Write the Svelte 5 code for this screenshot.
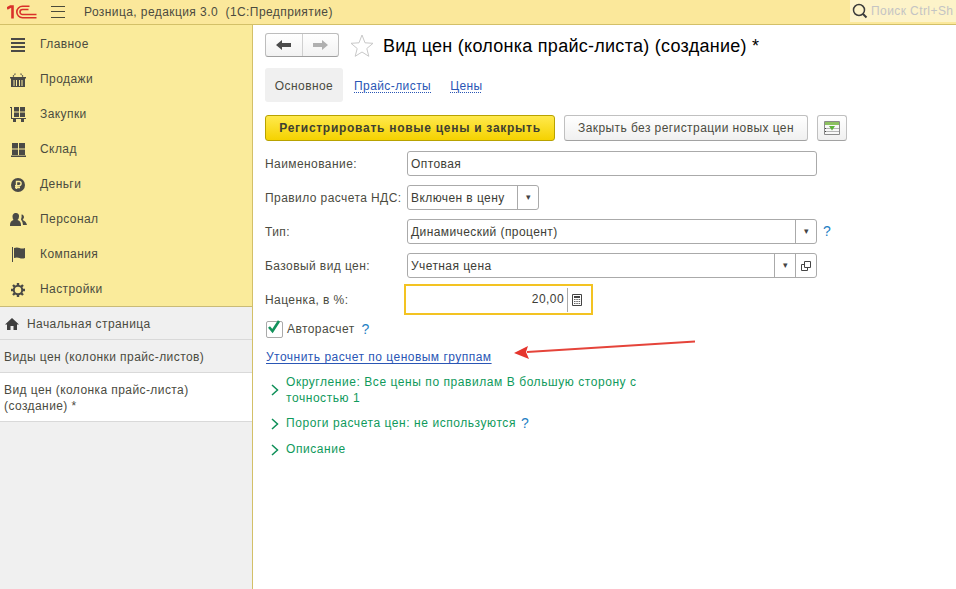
<script>
  const menu = ['Главное','Продажи','Закупки','Склад','Деньги','Персонал','Компания','Настройки'];
</script>

<div class="app">
  <header class="top">
    <svg class="logo" width="30" height="16" viewBox="0 0 30 16" fill="none" stroke="#d9302a">
      <path d="M0 4.500l3.500-2H5.500V14.500" stroke-width="2.600"/>
      <path d="M22.500 2.300H15.500a5.600 5.600 0 0 0 0 11.400H29.500" stroke-width="1.600"/>
      <path d="M21.500 5.500H15.500a2.500 2.500 0 0 0 0 5H29.500" stroke-width="1.600"/>
    </svg>
    <svg class="burger" width="16" height="14" viewBox="0 0 16 14" stroke="#4a4a3a"><path d="M1 1.500h14M1 6.500h14M1 12.500h14"/></svg>
    <div class="apptitle">Розница, редакция 3.0 &nbsp;(1С:Предприятие)</div>
    <div class="search">
      <svg width="16" height="16" viewBox="0 0 16 16" fill="none" stroke="#3c3c3c" stroke-width="1.500"><circle cx="7" cy="7" r="5.500"/><path d="M11 11l3.500 3.500" stroke-width="2"/></svg>
      <span>Поиск Ctrl+Sh</span>
    </div>
  </header>

  <div class="body">
    <aside class="side">
      <nav class="menu">
        {#each menu as item, i}
          <div class="mi">
            <span class="mic">
              {#if i === 0}
                <svg width="16" height="14" viewBox="0 0 16 14" fill="#4a4a46"><path d="M1 0h14v2H1zM1 4h14v2H1zM1 8h14v2H1zM1 12h14v2H1z"/></svg>
              {:else if i === 1}
                <svg width="16" height="14" viewBox="0 0 16 14"><path d="M0 4h16v1.500H0zM1 5h14v9H1z" fill="#4a4a46"/><path d="M4 7v6M6.500 7v6M9.500 7v6M12 7v6" stroke="#faeb9b"/><path d="M3 3.500L5.500.500M13 3.500L10.500.500" fill="none" stroke="#4a4a46" stroke-width="1.200" stroke-dasharray="1.500 .8"/></svg>
              {:else if i === 2}
                <svg width="16" height="15" viewBox="0 0 16 15" fill="#4a4a46"><path d="M0 0h2v11h14v1H1V1H0zM4 0h5v4.500H4zM10 0h5v4.500h-5zM4 5.500h5V10H4zM10 5.500h5V10h-5zM3 12h3v3H3zM11 12h3v3h-3z"/></svg>
              {:else if i === 3}
                <svg width="15" height="14" viewBox="0 0 15 14" fill="#4a4a46"><path d="M1 0h6v5.500H1zM8 0h6v5.500H8zM1 6.500h6V12H1zM8 6.500h6V12H8zM0 12.500h15V14H0z"/></svg>
              {:else if i === 4}
                <svg width="14" height="14" viewBox="0 0 14 14"><circle cx="7" cy="7" r="7" fill="#4a4a46"/><path d="M5.500 11V3.500h2.500a2 2 0 0 1 0 4.200H4M4 9.500h5" fill="none" stroke="#faeb9b" stroke-width="1.400"/></svg>
              {:else if i === 5}
                <svg width="17" height="13" viewBox="0 0 17 13" fill="#4a4a46"><path d="M6 0a3 3 0 0 1 3 3.500q0 2-1.500 3.500q3.500 1 3.500 5v1H0v-1q0-4 3.500-5Q2.500 5.500 2.500 3.500A3.200 3.200 0 0 1 6 0z"/><path d="M11.500 1.500a2.500 2.500 0 0 1 2 4q-.5 1-1 1.500q3.500 1 4.500 5h-4q0-3-2-5.500q1-2 .5-5z"/></svg>
              {:else if i === 6}
                <svg width="15" height="15" viewBox="0 0 15 15" fill="#4a4a46"><path d="M1 0h1v15H1zM3 1q3-1 5.500 0t5.500 0v10q-3 1-5.500 0T3 11z"/></svg>
              {:else}
                <svg width="16" height="16" viewBox="0 0 16 16"><path d="M8 1v14M1 8h14M3 3l10 10M13 3L3 13" stroke="#4a4a46" stroke-width="2.400"/><circle cx="8" cy="8" r="4.200" fill="#faeb9b" stroke="#4a4a46" stroke-width="2"/></svg>
              {/if}
            </span>
            <span>{item}</span>
          </div>
        {/each}
      </nav>
      <div class="tabs">
        <div class="tab home">
          <svg width="14" height="12" viewBox="0 0 14 12" fill="#3f3f3f"><path d="M7 0l7 6.500h-2V12H8.500V8h-3v4H2V6.500H0z"/></svg>
          <span>Начальная страница</span>
        </div>
        <div class="tab second">Виды цен (колонки прайс-листов)</div>
        <div class="tab active">Вид цен (колонка прайс-листа)<br />(создание) *</div>
      </div>
    </aside>

    <main class="main">
      <div class="titlebar">
        <div class="navbtns">
          <button class="nb" aria-label="Назад">
            <svg width="15" height="10" viewBox="0 0 15 10" fill="#4b4b4b"><path d="M0 5l6-5v3h9v4H6v3z"/></svg>
          </button>
          <button class="nb" aria-label="Вперед">
            <svg width="15" height="10" viewBox="0 0 15 10" fill="#b0b0b0"><path d="M15 5L9 0v3H0v4h9v3z"/></svg>
          </button>
        </div>
        <svg class="star" width="24" height="23" viewBox="0 0 24 23" fill="#fff" stroke="#c8c8c8"><path d="M12 1l3 7.800 8 .5-6.200 5.200 2 7.800L12 18l-6.800 4.300 2-7.800L1 9.300l8-.5z"/></svg>
        <h1>Вид цен (колонка прайс-листа) (создание) *</h1>
      </div>

      <div class="pagetabs">
        <div class="pt cur">Основное</div>
        <a class="pt lnk" href="#a">Прайс-листы</a>
        <a class="pt lnk" href="#a">Цены</a>
      </div>

      <div class="cmd">
        <button class="primary">Регистрировать новые цены и закрыть</button>
        <button class="secondary">Закрыть без регистрации новых цен</button>
        <button class="iconbtn" aria-label="Таблица">
          <svg width="16" height="14" viewBox="0 0 16 14"><path d="M.5.500h15v13H.500z" fill="#f8f8f8" stroke="#8a8a8a"/><path d="M1 1h14v3H1z" fill="#8cc060"/><path d="M1 7.500h14M1 10.500h14" stroke="#b5b5b5"/><path d="M1 7.500h1M1 10.500h1" stroke="#444"/><path d="M5 5h6L8 9.500z" fill="#5db33a"/></svg>
        </button>
      </div>

      <div class="form">
        <div class="row">
          <span class="lab">Наименование:</span>
          <div class="field w410"><span class="val">Оптовая</span></div>
        </div>
        <div class="row">
          <span class="lab">Правило расчета НДС:</span>
          <div class="field w132"><span class="val">Включен в цену</span><span class="drop">▾</span></div>
        </div>
        <div class="row">
          <span class="lab">Тип:</span>
          <div class="field w410"><span class="val">Динамический (процент)</span><span class="drop">▾</span></div>
          <span class="q qt">?</span>
        </div>
        <div class="row">
          <span class="lab">Базовый вид цен:</span>
          <div class="field w410">
            <span class="val">Учетная цена</span><span class="drop">▾</span>
            <span class="open"><svg width="10" height="10" viewBox="0 0 10 10" fill="none" stroke="#444"><path d="M3.500.500h6v6h-6zM3.500 3.500H.500v6h6V6.500"/></svg></span>
          </div>
        </div>
        <div class="row">
          <span class="lab">Наценка, в %:</span>
          <div class="focus">
            <span class="num">20,00</span>
            <span class="calc"><svg width="10" height="12" viewBox="0 0 10 12"><path d="M.500.500h9v11h-9z" fill="none" stroke="#444"/><path d="M2 2h6v2H2z" fill="#444"/><path d="M2 5.500h1.500M4.300 5.500h1.500M6.600 5.500h1.500M2 7.500h1.500M4.300 7.500h1.500M6.600 7.500h1.500M2 9.500h1.500M4.300 9.500h1.500M6.600 9.500h1.500" stroke="#666"/></svg></span>
          </div>
        </div>
      </div>

      <div class="check">
        <span class="cb"><svg width="16" height="15" viewBox="0 0 16 15" fill="none" stroke="#12925c" stroke-width="2.600"><path d="M3 7l3.500 4L13 1"/></svg></span>
        <span>Авторасчет</span>
        <span class="q qa">?</span>
      </div>

      <a class="refine" href="#a">Уточнить расчет по ценовым группам</a>

      <div class="groups">
        <div class="grp two">
          <svg class="chev" width="8" height="12" viewBox="0 0 8 12" fill="none" stroke="#0e8f58" stroke-width="1.500"><path d="M1 1l5.500 5L1 11"/></svg>
          <span class="gt">Округление: Все цены по правилам В большую сторону с<br />точностью 1</span>
        </div>
        <div class="grp">
          <svg class="chev" width="8" height="12" viewBox="0 0 8 12" fill="none" stroke="#0e8f58" stroke-width="1.500"><path d="M1 1l5.500 5L1 11"/></svg>
          <span class="gt">Пороги расчета цен: не используются</span>
          <span class="q ql">?</span>
        </div>
        <div class="grp">
          <svg class="chev" width="8" height="12" viewBox="0 0 8 12" fill="none" stroke="#0e8f58" stroke-width="1.500"><path d="M1 1l5.500 5L1 11"/></svg>
          <span class="gt">Описание</span>
        </div>
      </div>

      <svg class="arrow" width="190" height="22" viewBox="0 0 190 22">
        <path d="M182 1.500L14 12" stroke="#e5443a" stroke-width="1.800" fill="none"/>
        <path d="M1 13L15 6l-2 6 3 7z" fill="#e5352d"/>
      </svg>
    </main>
  </div>
</div>

<style>
  :global(body) { margin: 0; background: #fff; overflow: hidden; }
  .app { width: 956px; height: 589px; display: flex; flex-direction: column; overflow: hidden; font: 12px/15px "Liberation Sans", Arial, sans-serif; color: #4b4b3f; letter-spacing: .42px; }
  .top { height: 24px; flex: none; display: flex; align-items: center; background: #fbe89b; border-bottom: 1px solid #d3c068; box-sizing: content-box; }
  .logo { margin-left: 7px; flex: none; }
  .burger { margin-left: 13px; flex: none; }
  .apptitle { margin-left: 18px; white-space: nowrap; }
  .search { margin-left: auto; width: 106px; height: 22px; background: #fdf3c9; display: flex; align-items: center; gap: 3px; padding-left: 2px; box-sizing: border-box; align-self: flex-start; overflow: hidden; white-space: nowrap; color: #c4c4c4; flex: none; }
  .search svg { flex: none; }
  .body { flex: 1; display: flex; min-height: 0; }
  .side { width: 252px; flex: none; border-right: 1px solid #d3c068; background: #f0f0f0; display: flex; flex-direction: column; }
  .menu { background: #faeb9b; height: 282px; padding-top: 2px; box-sizing: border-box; border-bottom: 1px solid #c9bb77; }
  .mi { height: 35px; display: flex; align-items: center; }
  .mic { width: 40px; padding-left: 3px; box-sizing: border-box; display: flex; justify-content: center; padding-right: 7px; }
  .tab { padding: 9px 4px 8px; box-sizing: border-box; border-bottom: 1px solid #d9d9d9; background: #f0f0f0; height: 33px; white-space: nowrap; }
  .tab.second { padding-top: 10px; }
  .tab.home { display: flex; align-items: center; gap: 8px; padding: 2px 4px 0 5px; }
  .tab.active { background: #fff; height: 49px; padding-top: 9px; line-height: 16px; }
  .main { flex: 1; position: relative; padding-left: 12px; min-width: 0; }
  .titlebar { display: flex; align-items: center; height: 24px; margin-top: 8px; }
  .navbtns { display: flex; width: 74px; height: 24px; box-sizing: border-box; border: 1px solid #bdbdbd; border-bottom-color: #9f9f9f; border-radius: 3px; background: linear-gradient(#fff, #f2f2f2); }
  .nb { flex: 1; border: 0; background: transparent; padding: 0; display: flex; align-items: center; justify-content: center; }
  .nb + .nb { border-left: 1px solid #d0d0d0; }
  .star { margin-left: 11px; flex: none; }
  h1 { margin: 2px 0 0 9px; font: 400 18px/24px "Liberation Sans", Arial, sans-serif; color: #000; letter-spacing: .27px; white-space: nowrap; }
  .pagetabs { display: flex; margin-top: 11px; height: 34px; }
  .pt { display: flex; align-items: center; padding-top: 2px; box-sizing: border-box; }
  .cur { width: 78px; justify-content: center; background: #f0f0f0; border-radius: 3px; }
  .lnk { color: #2a56b5; text-decoration: underline dotted #2a56b5; text-underline-offset: 2px; }
  .pt.lnk:nth-child(2) { margin-left: 11px; }
  .pt.lnk:nth-child(3) { margin-left: 19px; }
  .cmd { display: flex; margin-top: 13px; height: 26px; }
  button { font: inherit; letter-spacing: inherit; cursor: pointer; }
  .primary { width: 290px; height: 26px; border: 1px solid #b8a200; border-radius: 3px; background: linear-gradient(#ffe94d, #f5d200); color: #3f3f30; font-weight: 700; padding: 0; letter-spacing: .72px; }
  .secondary { width: 244px; height: 26px; margin-left: 9px; border: 1px solid #c0c0c0; border-bottom-color: #a2a2a2; border-radius: 3px; background: linear-gradient(#fff, #f0f0f0); color: #4b4b3f; padding: 0; }
  .iconbtn { width: 30px; height: 26px; margin-left: 9px; border: 1px solid #c0c0c0; border-bottom-color: #a2a2a2; border-radius: 3px; background: linear-gradient(#fff, #f0f0f0); padding: 0; display: flex; align-items: center; justify-content: center; }
  .form { margin-top: 10px; display: flex; flex-direction: column; gap: 9px; }
  .row { display: flex; align-items: center; height: 25px; }
  .lab { width: 142px; flex: none; white-space: nowrap; padding-top: 1px; }
  .field { height: 25px; box-sizing: border-box; border: 1px solid #aaa; border-radius: 3px; display: flex; align-items: center; background: #fff; }
  .w410 { width: 410px; }
  .w132 { width: 132px; }
  .val { flex: 1; padding: 1px 0 0 3px; color: #3d3d36; white-space: nowrap; }
  .drop { width: 21px; height: 100%; border-left: 1px solid #aaa; display: flex; align-items: center; justify-content: center; font-size: 9px; color: #444; letter-spacing: 0; box-sizing: border-box; }
  .open { width: 21px; height: 100%; border-left: 1px solid #aaa; display: flex; align-items: center; justify-content: center; box-sizing: border-box; }
  .focus { width: 189px; height: 31px; margin-left: -3px; box-sizing: border-box; border: 2px solid #f3c322; display: flex; align-items: center; justify-content: flex-end; background: #fff; }
  .num { color: #3d3d36; padding-right: 3px; }
  .calc { width: 24px; height: 24px; border-left: 1px solid #aaa; box-sizing: border-box; display: flex; align-items: center; justify-content: center; padding-right: 5px; }
  .q { color: #1f7fc4; font-size: 14px; margin-left: 6px; letter-spacing: 0; }
  .q.qa { margin-left: 7px; }
  .q.ql { margin-left: 5px; }
  .check { display: flex; align-items: center; margin-top: 8px; height: 18px; }
  .cb { width: 15px; height: 15px; border: 1px solid #aaa; border-radius: 2px; margin-left: 1px; margin-right: 4px; position: relative; box-sizing: content-box; display: block; flex: none; }
  .cb svg { position: absolute; left: -1px; top: -2px; }
  .refine { display: block; margin-top: 12px; margin-left: 1px; color: #2a56b5; width: max-content; text-underline-offset: 2px; letter-spacing: .48px; }
  .groups { margin-top: 9px; }
  .grp { display: flex; align-items: center; margin-left: 6px; min-height: 15px; margin-bottom: 11px; }
  .grp.two { line-height: 16px; margin-bottom: 10px; }
  .chev { flex: none; }
  .gt { margin-left: 7px; color: #0f9a5c; white-space: nowrap; letter-spacing: .56px; }
  .arrow { position: absolute; left: 260px; top: 315px; }
</style>
